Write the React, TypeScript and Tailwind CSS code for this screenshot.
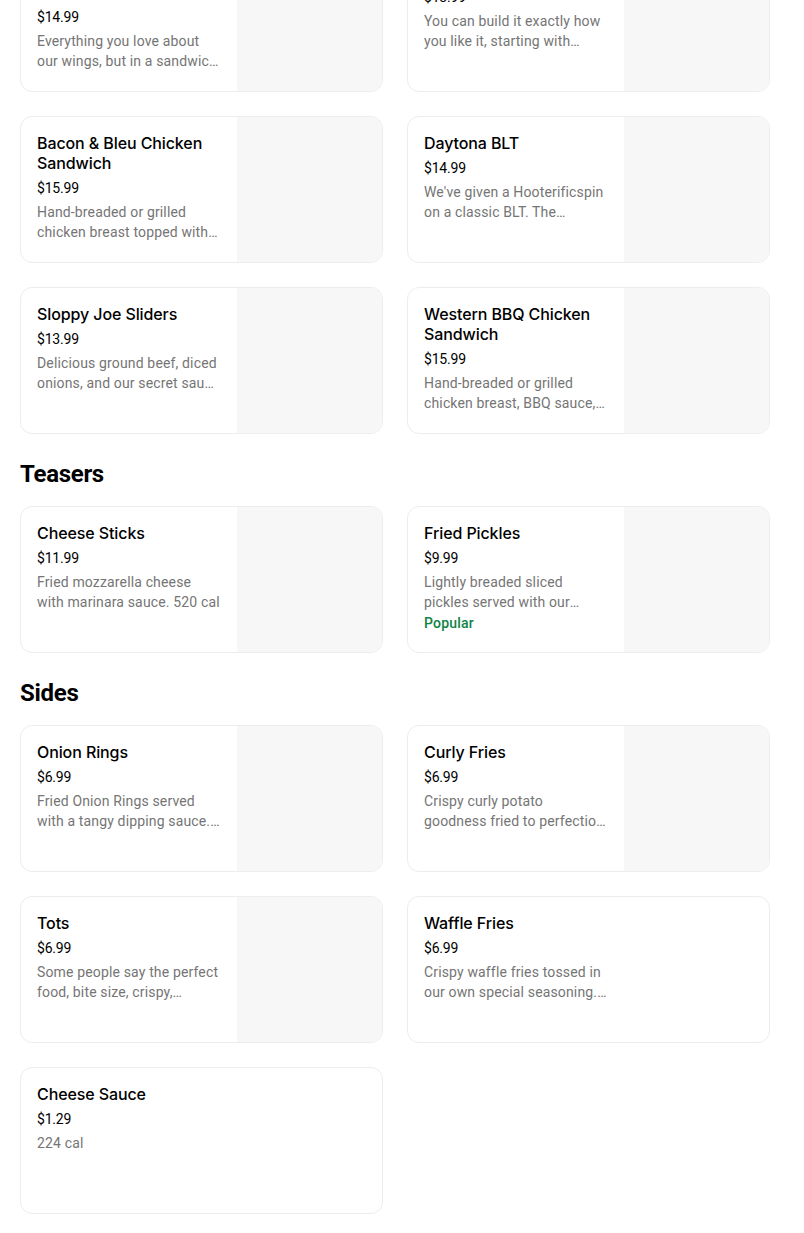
import React from 'react';

interface MenuItem {
  name: string;
  price: string;
  desc: string;
  image?: boolean;
  popular?: boolean;
}

interface Section {
  title?: string;
  items: MenuItem[];
}

const sections: Section[] = [
  {
    items: [
      {
        name: 'Buffalo Chicken Sandwich',
        price: '$14.99',
        desc: 'Everything you love about our wings, but in a sandwich. Hand-breaded chicken breast tossed in your favorite sauce.',
        image: true,
      },
      {
        name: 'Build Your Own Burger',
        price: '$13.99',
        desc: 'You can build it exactly how you like it, starting with handcrafted beef and your choice of toppings.',
        image: true,
      },
      {
        name: 'Bacon & Bleu Chicken Sandwich',
        price: '$15.99',
        desc: 'Hand-breaded or grilled chicken breast topped with bacon, bleu cheese crumbles and more.',
        image: true,
      },
      {
        name: 'Daytona BLT',
        price: '$14.99',
        desc: "We've given a Hooterificspin on a classic BLT. The mouthwatering stack of bacon, lettuce and tomato.",
        image: true,
      },
      {
        name: 'Sloppy Joe Sliders',
        price: '$13.99',
        desc: 'Delicious ground beef, diced onions, and our secret sauce piled on toasted slider buns.',
        image: true,
      },
      {
        name: 'Western BBQ Chicken Sandwich',
        price: '$15.99',
        desc: 'Hand-breaded or grilled chicken breast, BBQ sauce, onion rings and cheddar cheese.',
        image: true,
      },
    ],
  },
  {
    title: 'Teasers',
    items: [
      {
        name: 'Cheese Sticks',
        price: '$11.99',
        desc: 'Fried mozzarella cheese with marinara sauce. 520 cal',
        image: true,
      },
      {
        name: 'Fried Pickles',
        price: '$9.99',
        desc: 'Lightly breaded sliced pickles served with our ranch dressing for dipping.',
        image: true,
        popular: true,
      },
    ],
  },
  {
    title: 'Sides',
    items: [
      {
        name: 'Onion Rings',
        price: '$6.99',
        desc: 'Fried Onion Rings served with a tangy dipping sauce. 730 cal',
        image: true,
      },
      {
        name: 'Curly Fries',
        price: '$6.99',
        desc: 'Crispy curly potato goodness fried to perfection and seasoned.',
        image: true,
      },
      {
        name: 'Tots',
        price: '$6.99',
        desc: 'Some people say the perfect food, bite size, crispy, scrumptious and golden brown.',
        image: true,
      },
      {
        name: 'Waffle Fries',
        price: '$6.99',
        desc: 'Crispy waffle fries tossed in our own special seasoning. 480 cal',
      },
      {
        name: 'Cheese Sauce',
        price: '$1.29',
        desc: '224 cal',
      },
    ],
  },
];

const ItemCard: React.FC<{ item: MenuItem }> = ({ item }) => (
  <div className="flex h-[147px] overflow-hidden rounded-xl border border-[#ededed] bg-white">
    <div className="flex w-[216px] shrink-0 flex-col px-4 pt-4">
      <h3 className="font-['Inter',sans-serif] text-[16px] font-medium leading-5 tracking-[-0.1px] text-black">
        {item.name}
      </h3>
      <p className="mt-[5px] text-[14px] leading-5 tracking-[-0.2px] text-black">{item.price}</p>
      <p className="mt-1 line-clamp-2 text-[14px] leading-5 tracking-[0.15px] text-[#757575]">{item.desc}</p>
      {item.popular && (
        <p className="mt-[1px] text-[14px] font-medium leading-5 tracking-[0.2px] text-[#0e8345]">Popular</p>
      )}
    </div>
    {item.image && <div className="h-full flex-1 bg-[#f7f7f7]" />}
  </div>
);

export default function App() {
  return (
    <div className="min-h-[1233px] overflow-hidden bg-white font-['Roboto',sans-serif]">
      <div className="-mt-[55px] ml-5 w-[750px] pb-5">
        {sections.map((section, i) => (
          <section key={i}>
            {section.title && (
              <h2 className="mb-4 mt-6 text-[24px] font-bold leading-8 tracking-[-0.3px] text-black">
                {section.title}
              </h2>
            )}
            <div className="grid grid-cols-2 gap-6">
              {section.items.map((item) => (
                <ItemCard key={item.name} item={item} />
              ))}
            </div>
          </section>
        ))}
      </div>
    </div>
  );
}
